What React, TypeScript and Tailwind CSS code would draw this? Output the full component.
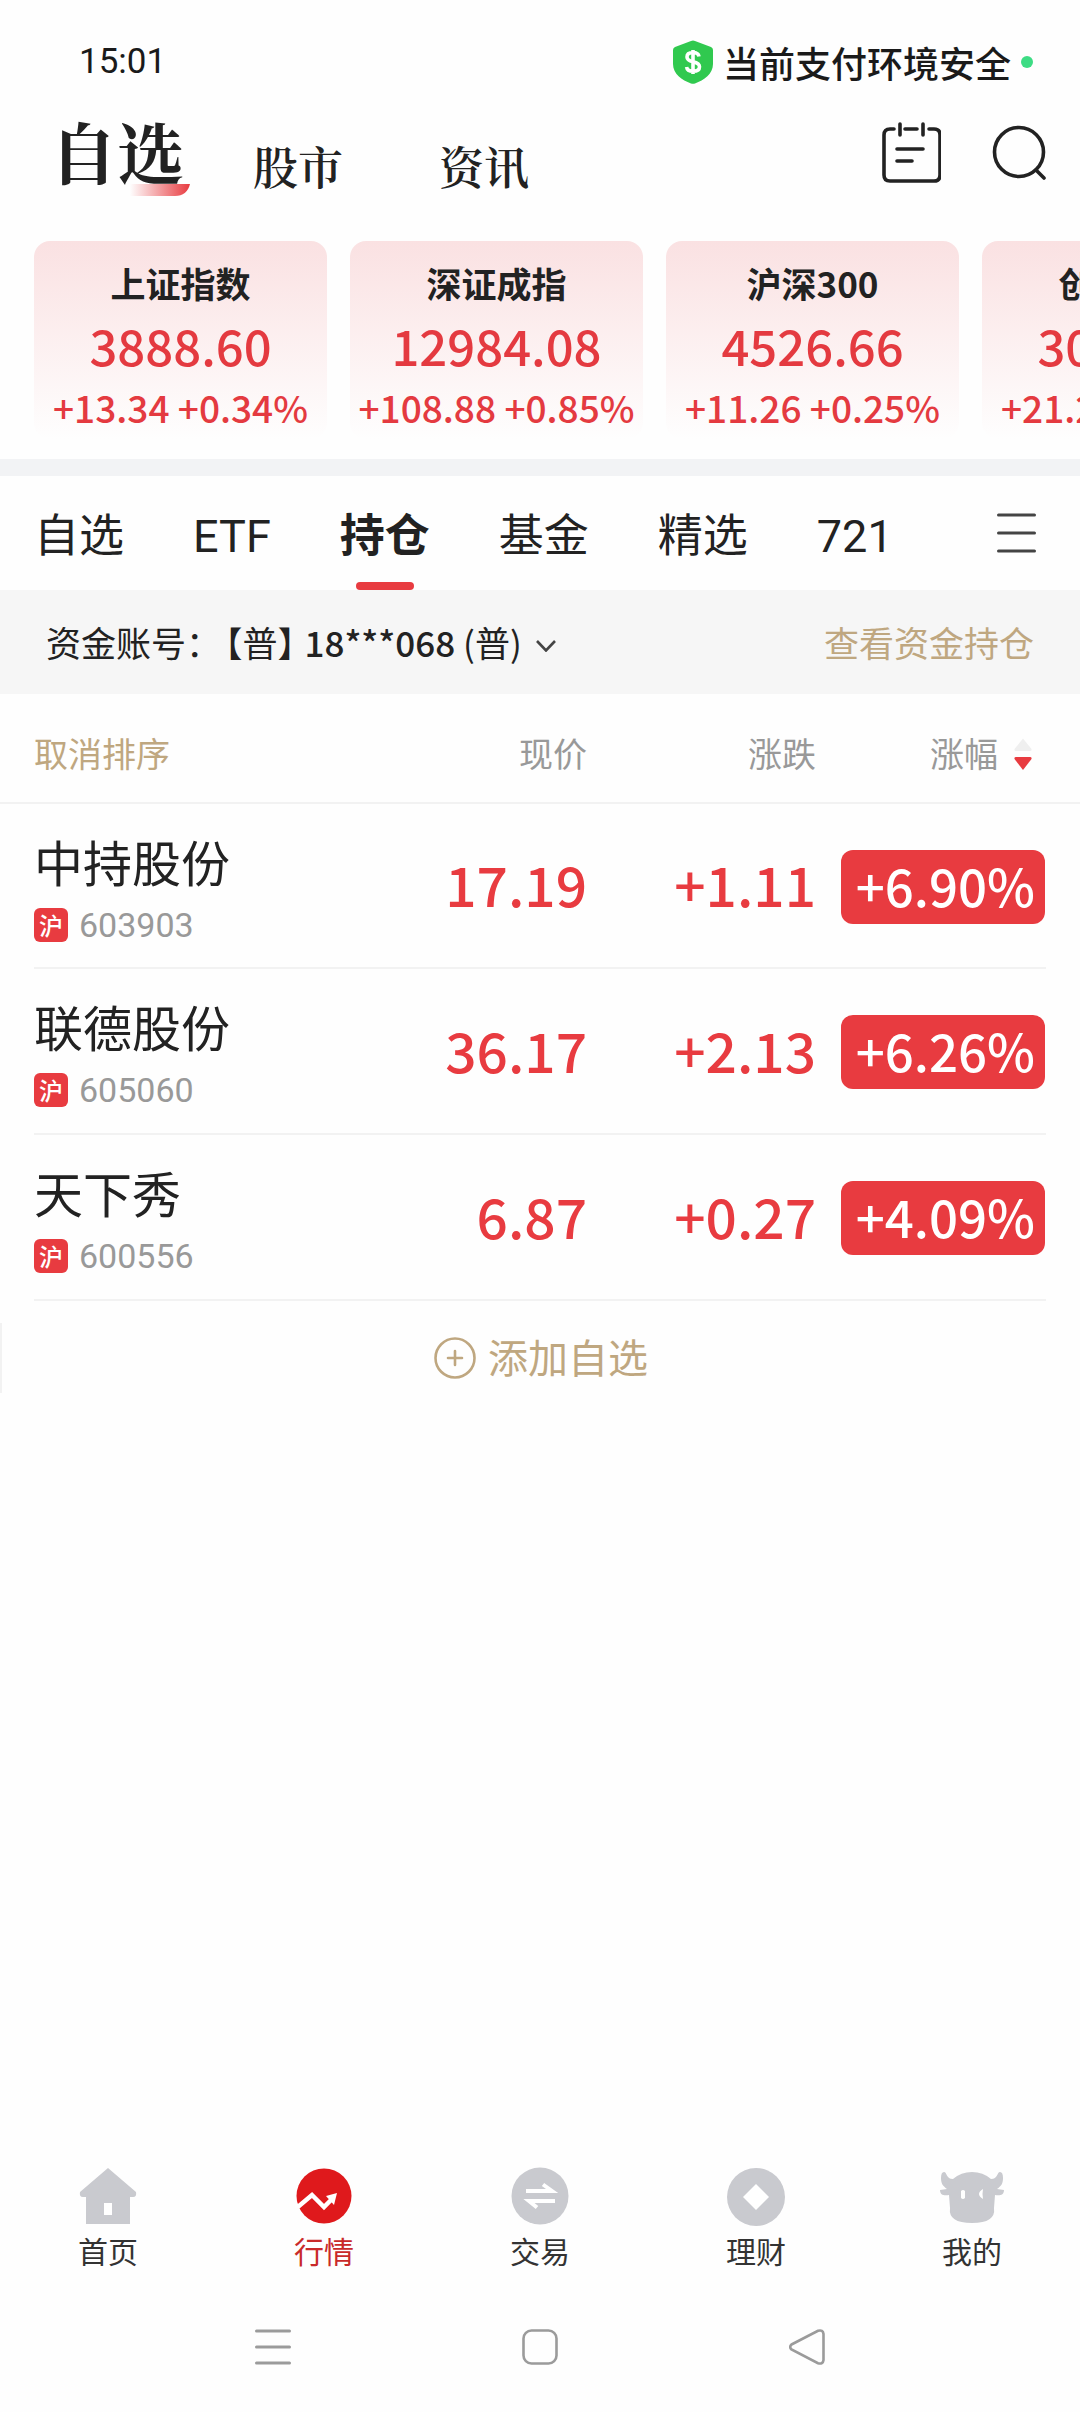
import { useState } from "react";

const indexes = [
  { name: "上证指数", value: "3888.60", change: "+13.34", percent: "+0.34%" },
  { name: "深证成指", value: "12984.08", change: "+108.88", percent: "+0.85%" },
  { name: "沪深300", value: "4526.66", change: "+11.26", percent: "+0.25%" },
  { name: "创业板指", value: "3021.45", change: "+21.20", percent: "+0.71%" },
];

const stocks = [
  { name: "中持股份", code: "603903", price: "17.19", change: "+1.11", percent: "+6.90%" },
  { name: "联德股份", code: "605060", price: "36.17", change: "+2.13", percent: "+6.26%" },
  { name: "天下秀", code: "600556", price: "6.87", change: "+0.27", percent: "+4.09%" },
];

function StatusBar() {
  return (
    <div className="flex h-[104px] items-center justify-between pt-5 pr-[47px] pl-[79px]">
      <span className="font-['Roboto','Noto_Sans_CJK_SC',sans-serif] text-[35px] leading-10 text-[#1a1a1a]">15:01</span>
      <div className="flex items-center">
        <svg className="mr-[10px] h-11 w-10" viewBox="0 0 40 44">
          <path d="M18 1Q20 0 22 1L38 7Q40 8 40 10V24C40 34 31 40 22 43.500Q20 44 18 43.500C9 40 0 34 0 24V10Q0 8 2 7Z" fill="#30c94f" />
          <path d="M26 16.500C25.500 13.500 23 12.500 20 12.500C16.500 12.500 14 14 14 17C14 20 16.500 21 20 21.800C24 22.700 26.500 23.800 26.500 26.800C26.500 30 23.500 31.300 20 31.300C16.500 31.300 14 29.800 13.600 27M20 10V34" fill="none" stroke="#fff" strokeWidth="3.600" />
        </svg>
        <span className="text-[36px] leading-10 font-medium text-[#1a1a1a]">当前支付环境安全</span>
        <span className="ml-[10px] size-3 rounded-full bg-[#3ddc84]"></span>
      </div>
    </div>
  );
}

function Header() {
  return (
    <header className="flex h-[137px] items-start justify-between pr-[34px] pl-[50px]">
      <nav className="flex items-start font-['Noto_Serif_CJK_SC','Noto_Sans_CJK_SC',serif] text-[45px] leading-[124px] font-semibold text-[#222]">
        <button className="relative text-[67px] leading-[92px] font-bold">
          自选
          <svg className="absolute right-[-6px] bottom-0 h-3 w-[60px]" viewBox="0 0 60 12">
            <defs>
              <linearGradient id="swash">
                <stop offset="0" stopColor="#e83b40" stopOpacity="0" />
                <stop offset="1" stopColor="#e83b40" />
              </linearGradient>
            </defs>
            <path d="M0 0H60Q57 12 45 12H0Z" fill="url(#swash)" />
          </svg>
        </button>
        <button className="ml-[69px]">股市</button>
        <button className="ml-24">资讯</button>
      </nav>
      <div className="mt-4 flex gap-[51px]">
        <button aria-label="日历">
          <svg className="h-16 w-[60px]" viewBox="0 0 60 64" fill="none" stroke="#222" strokeWidth="3.600" strokeLinecap="round">
            <path d="M13 9H9Q3 9 3 15V55Q3 61 9 61H53Q59 61 59 55V15Q59 9 53 9H48M24 9H36M19 4V15M42 4V15M16 29H42M16 41H31" />
          </svg>
        </button>
        <button aria-label="搜索">
          <svg className="h-16 w-[54px]" viewBox="0 0 54 64" fill="none" stroke="#222" strokeWidth="3.600" strokeLinecap="round">
            <circle cx="27" cy="32" r="24.500" />
            <path d="M44 50L52 58" />
          </svg>
        </button>
      </div>
    </header>
  );
}

function IndexCards() {
  return (
    <section className="flex h-[218px] gap-[23px] overflow-hidden pl-[34px]">
      {indexes.map((item) => (
        <div
          key={item.name}
          className="flex h-[198px] w-[293px] shrink-0 flex-col items-center rounded-2xl bg-linear-to-b from-[#fae1e2] to-[#fefefe] pt-[22px] whitespace-nowrap text-[#e43a40]"
        >
          <h3 className="text-[35px] leading-10 font-bold text-[#222]">{item.name}</h3>
          <p className="mt-3 text-[49px] leading-[60px] font-medium">{item.value}</p>
          <p className="mt-2 text-[37px] leading-12 font-medium">
            {item.change} {item.percent}
          </p>
        </div>
      ))}
    </section>
  );
}

const tabs = ["自选", "ETF", "持仓", "基金", "精选", "721"];

function GroupTabs() {
  const [activeTab, setActiveTab] = useState("持仓");

  return (
    <div className="flex h-[114px] items-stretch justify-between pr-11 pl-[34px]">
      <div className="flex gap-[69px] font-['Roboto','Noto_Sans_CJK_SC',sans-serif] text-[45px] text-[#222]">
        {tabs.map((tab) => (
          <button key={tab} onClick={() => setActiveTab(tab)} className={tab === activeTab ? "relative pt-2 font-bold" : "relative pt-2"}>
            {tab}
            {tab === activeTab && <span className="absolute bottom-0 left-1/2 h-2 w-[58px] -translate-x-1/2 rounded-full bg-[#e83b40]"></span>}
          </button>
        ))}
      </div>
      <button aria-label="菜单">
        <svg className="h-10 w-[39px]" viewBox="0 0 39 40" stroke="#444" strokeWidth="3" strokeLinecap="round">
          <path d="M1.500 2H37.500M1.500 20H37.500M1.500 38H37.500" />
        </svg>
      </button>
    </div>
  );
}

function AccountBar() {
  return (
    <div className="flex h-[104px] items-center justify-between bg-[#f6f6f6] px-[46px] text-[35px] whitespace-nowrap text-[#222]">
      <button className="flex items-center">
        <span>资金账号：</span>
        <span className="ml-1 [text-spacing-trim:trim-start]">【普】</span>
        <span className="-ml-2 font-medium">18***068</span>
        <span className="ml-2">(普)</span>
        <svg className="mt-2 ml-[14px] h-3 w-5" viewBox="0 0 20 12" fill="none" stroke="#444" strokeWidth="2.600">
          <path d="M1 1L10 10.500L19 1" />
        </svg>
      </button>
      <a href="#" className="text-[#bfa780]">查看资金持仓</a>
    </div>
  );
}

function StockTable() {
  return (
    <table className="w-full table-fixed border-collapse">
      <thead>
        <tr className="h-[109px] border-b-2 border-[#f2f2f2] text-[34px] text-[#999]">
          <th className="pt-2 pl-[34px] text-left font-normal">
            <button className="text-[#bfa780]">取消排序</button>
          </th>
          <th className="w-[246px] pt-2 text-right font-normal">现价</th>
          <th className="w-[229px] pt-2 text-right font-normal">涨跌</th>
          <th className="w-[264px] pt-2 pr-[48px] font-normal">
            <button className="ml-auto flex items-center gap-4">
              涨幅
              <svg className="mt-1 h-8 w-[18px]" viewBox="0 0 18 32">
                <path d="M9 0.500L17.500 11Q18 13 16 13H2Q0 13 0.500 11Z" fill="#efefef" />
                <path d="M9 32L17.500 21Q18 19 16 19H2Q0 19 0.500 21Z" fill="#e83b40" />
              </svg>
            </button>
          </th>
        </tr>
      </thead>
      <tbody className="text-[55px] font-medium text-[#e83b40]">
        {stocks.map((stock) => (
          <tr
            key={stock.code}
            className="h-[166px] bg-[linear-gradient(#f2f2f2,#f2f2f2)] bg-[length:calc(100%-68px)_2px] bg-bottom bg-no-repeat"
          >
            <td className="pl-[34px] font-normal">
              <div className="text-[49px] leading-[60px] text-[#222]">{stock.name}</div>
              <div className="mt-4 flex items-center gap-[11px]">
                <span className="flex size-[34px] items-center justify-center rounded-md bg-[#e83b40] text-[24px] font-medium text-white">沪</span>
                <span className="font-['Roboto','Noto_Sans_CJK_SC',sans-serif] text-[34px] leading-9 text-[#999]">{stock.code}</span>
              </div>
            </td>
            <td className="pb-[6px] text-right">{stock.price}</td>
            <td className="pb-[6px] text-right">{stock.change}</td>
            <td className="pr-[35px]">
              <div className="ml-auto h-[74px] w-[204px] rounded-xl bg-[#e83b40] pr-[10px] text-right text-[51px] leading-[70px] text-white">
                {stock.percent}
              </div>
            </td>
          </tr>
        ))}
      </tbody>
    </table>
  );
}

const navItems = [
  {
    label: "首页",
    icon: (
      <>
        <path d="M32 4L60 28Q61 33 57 33H54V60H10V33H7Q3 33 4 28Z" />
        <path d="M28 39H36V51H28Z" fill="#fff" />
      </>
    ),
  },
  {
    label: "行情",
    icon: (
      <>
        <circle cx="32" cy="32" r="27.500" />
        <path d="M3 42H7L20 31L32 43L39 36" fill="none" stroke="#fff" strokeWidth="4.500" />
        <path d="M34 32L45 29L42 41Z" fill="#fff" />
      </>
    ),
  },
  {
    label: "交易",
    icon: (
      <>
        <circle cx="32" cy="32" r="28.500" />
        <path d="M18 27H44L35 20.500M47 37H21L29 43.500" fill="none" stroke="#fff" strokeWidth="4" />
      </>
    ),
  },
  {
    label: "理财",
    icon: (
      <>
        <circle cx="32" cy="33" r="29" />
        <path d="M32 20L45 33L32 46L19 33Z" fill="#fff" />
      </>
    ),
  },
  {
    label: "我的",
    icon: (
      <>
        <path d="M1 14Q1 8 4 8C7 8 6 15 13 15Q21 8 32 8Q43 8 51 15C58 15 57 8 60 8Q63 8 63 14C63 20 61 22 57 25L64 26C64 31 60 32 55 31L54 44Q56 59 32 59Q8 59 10 44L9 31C4 32 0 31 0 26L7 25C3 22 1 20 1 14Z" />
        <path d="M21 27Q23 25 25 27V34Q23 36 21 34ZM43 25Q35 30 43 35Q42 30 43 25Z" fill="#fff" />
      </>
    ),
  },
];

function BottomNav() {
  return (
    <nav className="grid h-[126px] grid-cols-5">
      {navItems.map((item) => (
        <button
          key={item.label}
          className={item.label === "行情" ? "flex flex-col items-center text-[#c92a2a]" : "flex flex-col items-center text-[#333]"}
        >
          <svg className="size-16" viewBox="0 0 64 64" fill={item.label === "行情" ? "#df191c" : "#c9cacf"}>
            {item.icon}
          </svg>
          <span className="mt-[2px] text-[30px] leading-10">{item.label}</span>
        </button>
      ))}
    </nav>
  );
}

function SystemKeys() {
  return (
    <div className="flex h-[122px] items-center justify-center gap-[231px] pb-2 text-[#9b9b9b]">
      <button aria-label="最近">
        <svg className="size-9" viewBox="0 0 36 36" stroke="currentColor" strokeWidth="3" strokeLinecap="round">
          <path d="M1.500 2H34.500M1.500 18H34.500M1.500 34H34.500" />
        </svg>
      </button>
      <button aria-label="主屏">
        <svg className="size-9" viewBox="0 0 36 36" fill="none" stroke="currentColor" strokeWidth="2.600">
          <rect x="1.500" y="1.500" width="33" height="33" rx="8" />
        </svg>
      </button>
      <button aria-label="返回">
        <svg className="size-9" viewBox="0 0 36 36" fill="none" stroke="currentColor" strokeWidth="2.600">
          <path d="M2.500 15.500L29 1.800Q34 0.500 34.500 5V31Q34 35.500 29 34.200L2.500 20.500Q0 18 2.500 15.500Z" />
        </svg>
      </button>
    </div>
  );
}

function App() {
  return (
    <div className="flex min-h-screen flex-col overflow-hidden bg-[#fefefe] font-['Noto_Sans_CJK_SC',sans-serif]">
      <StatusBar />
      <Header />
      <IndexCards />
      <div className="h-[17px] bg-[#f2f3f5]"></div>
      <GroupTabs />
      <AccountBar />
      <StockTable />

      {/* Add stock */}
      <button className="mt-[22px] flex h-[70px] items-center justify-center gap-3 border-l-2 border-[#f2f2f2] text-[40px] leading-[50px] text-[#bfa780]">
        <svg className="size-[42px]" viewBox="0 0 42 42" fill="none" stroke="#bfa780" strokeWidth="2.600" strokeLinecap="round">
          <circle cx="21" cy="21" r="19.500" />
          <path d="M14 21H28M21 14V28" />
        </svg>
        <span className="pb-1">添加自选</span>
      </button>

      <div className="mt-auto">
        <BottomNav />
        <SystemKeys />
      </div>
    </div>
  );
}

export default App;
